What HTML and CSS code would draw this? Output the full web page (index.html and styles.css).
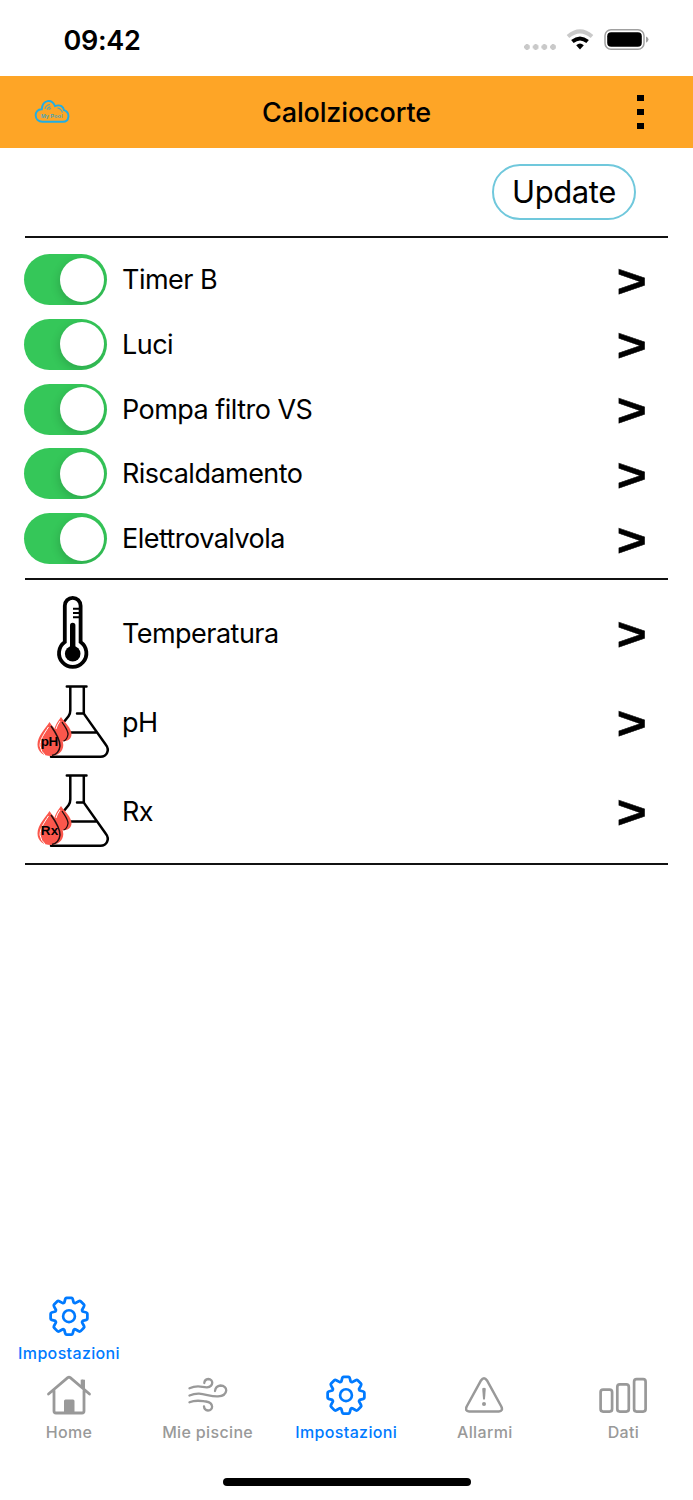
FILE: index.html
```html
<!DOCTYPE html>
<html lang="it">
<head>
<meta charset="utf-8">
<title>Calolziocorte</title>
<link rel="stylesheet" href="styles.css">
</head>
<body>
<svg class="defs" width="0" height="0">
  <symbol id="gear" viewBox="-19.6 -19.8 39.2 39.2">
    <path d="M-4.6-13.4L-3.6-17Q-3.3-18-2.4-18H2.4Q3.3-18 3.6-17L4.6-13.4Q5.3-12.7 6.1-12.8L9.6-14.7Q10.7-15.3 11.4-14.6L14.6-11.4Q15.3-10.7 14.7-9.6L12.8-6.1Q12.7-5.3 13.4-4.6L17-3.6Q18-3.3 18-2.4V2.4Q18 3.3 17 3.6L13.4 4.6Q12.7 5.3 12.8 6.1L14.7 9.6Q15.3 10.7 14.6 11.4L11.4 14.6Q10.7 15.3 9.6 14.7L6.1 12.8Q5.3 12.7 4.6 13.4L3.6 17Q3.3 18 2.4 18H-2.4Q-3.3 18-3.6 17L-4.6 13.4Q-5.3 12.7-6.1 12.8L-9.6 14.7Q-10.7 15.3-11.4 14.6L-14.6 11.4Q-15.3 10.7-14.7 9.6L-12.8 6.1Q-12.7 5.3-13.4 4.6L-17 3.6Q-18 3.3-18 2.4V-2.4Q-18-3.3-17-3.6L-13.4-4.6Q-12.7-5.3-12.8-6.1L-14.7-9.6Q-15.3-10.7-14.6-11.4L-11.4-14.6Q-10.7-15.3-9.6-14.7L-6.1-12.8Q-5.3-12.7-4.6-13.4Z" fill="none" stroke="currentColor" stroke-width="2.7" stroke-linejoin="round"/>
    <circle r="5.8" fill="none" stroke="currentColor" stroke-width="2.6"/>
  </symbol>
  <symbol id="flask" viewBox="0 0 74 74">
    <g fill="none" stroke="#000" stroke-width="2.500" stroke-linecap="round" stroke-linejoin="round">
      <path d="M29.800 1.600H49.500M33.300 2V25.500Q33.300 29 31.500 31.300L24 40.500M46.800 2V28.600L69 60C72.800 65 70 71.800 63.500 71.800H14M40 28.600H47M33 47.600H58.500"/>
    </g>
    <path d="M24 32C28 38 34.500 42.500 34.500 49.500C34.500 58 20 59 17 49C16 43 21 36 24 32Z" fill="#fb574c"/>
    <path d="M12.500 37C17 44 26.300 51 26.300 60C26.300 74.500 .5 75 .5 59.500C.5 51 8 44 12.500 37Z" fill="#fb574c"/>
    <path d="M25 37C28 42 31 45 31 49.500Q30 55 26.500 56" fill="none" stroke="#231010" stroke-width="1.300"/>
    <path d="M14 41C19 48 23 54 23 61Q22 69 15 70.500" fill="none" stroke="#231010" stroke-width="1.500"/>
    <path d="M11.500 42C7 49 3 54 3 61Q4 67 8 70M23 36Q20 40 19 44" fill="none" stroke="#fff" stroke-width="1"/>
  </symbol>
</svg>
<header class="status">
  <time class="clock">09:42</time>
  <div class="signals">
    <i class="dots"></i>
    <svg class="wifi" width="28" height="22" viewBox="0 0 28 22">
      <path d="M2 7.600Q14-2.800 26 7.600" fill="none" stroke="#c9c9c9" stroke-width="4"/>
      <path d="M6.400 12.600Q14 6.200 21.600 12.600" fill="none" stroke="#000" stroke-width="3.900"/>
      <path d="M10.200 16.300Q14 12.800 17.800 16.300L14 20.400Z"/>
    </svg>
    <svg class="battery" width="45" height="22" viewBox="0 0 45 22">
      <rect x="1" y=".8" width="39" height="19.500" rx="6" fill="none" stroke="#a0a0a0" stroke-width="1.500"/>
      <rect x="3.200" y="3.200" width="34.600" height="14.600" rx="4"/>
      <path d="M42 7.500Q44.500 8.500 44.500 10.500T42 13.700Z" fill="#a0a0a0"/>
    </svg>
  </div>
</header>
<nav class="appbar">
  <svg class="logo" width="36" height="24" viewBox="0 0 36 24">
    <path d="M8.500 21.700C-.5 21.700-.5 9 7.800 9.300C8.500-1 18-1.200 21 6.100C26.500 4 29.500 7 30 10.200C36.500 12.500 35.500 21.700 29 21.700Z" fill="none" stroke="#1faee6" stroke-width="1.900"/>
    <path d="M11 9Q11.500 5.200 16 4.500M13.200 9.600Q13.500 7.500 16.500 6.700M15 9.800Q15.500 8.800 17 8.500M23.500 8Q27 8.500 28.500 12.500" fill="none" stroke="#4ba6b6" stroke-width="1.100"/>
    <text class="logo-text" x="7" y="18" textLength="21.500">My Pool</text>
  </svg>
  <h1 class="title">Calolziocorte</h1>
  <span class="more"><i></i><i></i><i></i></span>
</nav>
<main class="content">
  <div class="actions"><button class="update"><span>Update</span></button></div>
  <section class="switches">
    <div class="row"><span class="switch"><i></i></span><span class="name">Timer B</span><b class="go">&gt;</b></div>
    <div class="row"><span class="switch"><i></i></span><span class="name">Luci</span><b class="go">&gt;</b></div>
    <div class="row"><span class="switch"><i></i></span><span class="name">Pompa filtro VS</span><b class="go">&gt;</b></div>
    <div class="row"><span class="switch"><i></i></span><span class="name">Riscaldamento</span><b class="go">&gt;</b></div>
    <div class="row"><span class="switch"><i></i></span><span class="name">Elettrovalvola</span><b class="go">&gt;</b></div>
  </section>
  <section class="sensors">
    <div class="row">
      <span class="pic"><svg width="74" height="74" viewBox="0 0 74 74">
        <path d="M27.800 46V9.800A7.900 7.900 0 0 1 43.600 9.800V46A13.700 13.700 0 1 1 27.800 46Z" fill="none" stroke="#000" stroke-width="3.800"/>
        <circle cx="35.700" cy="57.800" r="7.800"/>
        <path d="M35.700 57V29.500" stroke="#000" stroke-width="5.400" stroke-linecap="round"/>
        <path d="M36 12.800H43M36 17H43M36 21.200H43" stroke="#000" stroke-width="1.900"/>
      </svg></span><span class="name">Temperatura</span><b class="go">&gt;</b></div>
    <div class="row">
      <span class="pic"><svg width="74" height="74"><use href="#flask"/><text class="tag" x="3.800" y="61.300" textLength="17.500">pH</text></svg></span><span class="name">pH</span><b class="go">&gt;</b></div>
    <div class="row">
      <span class="pic"><svg width="74" height="74"><use href="#flask"/><text class="tag" x="3.800" y="61.300" textLength="17.500">Rx</text></svg></span><span class="name">Rx</span><b class="go">&gt;</b></div>
  </section>
</main>
<footer class="footer">
  <div class="tabs">
    <a class="tab active"><svg width="40" height="40"><use href="#gear"/></svg><span>Impostazioni</span></a>
  </div>
  <div class="tabs">
    <a class="tab"><svg width="46" height="40" viewBox="0 0 46 40">
      <path d="M2.500 19L21.700 2.700Q23 1.800 24.300 2.700L43.500 19M8 15.500V36Q8 38 10 38H36Q38 38 38 36V15.500M36.500 12V6" fill="none" stroke="currentColor" stroke-width="2.800" stroke-linecap="round"/>
      <path d="M34.700 4.800H39V15L34.700 11.500ZM18 26Q18 24.500 19.500 24.500H27Q28.500 24.500 28.500 26V38H18Z" fill="currentColor"/></svg><span>Home</span></a>
    <a class="tab"><svg width="40" height="40" viewBox="0 0 40 40">
      <path d="M1.500 13.200C10 9.500 14 12.500 19 12.300C26 11.500 25.500 4 20.300 4Q16.500 4.500 16.300 8M1.500 20.500C13 15.500 20 22 30 21.400C41 20.500 40 10.500 32.500 10.500Q27.500 11 27 16M1.500 27.300C8 24.500 12 25.800 18 26.500C26 27.500 25.500 35.500 20 35.500Q16.300 35 16 31.300" fill="none" stroke="currentColor" stroke-width="2.300" stroke-linecap="round"/></svg><span>Mie piscine</span></a>
    <a class="tab active"><svg width="40" height="40"><use href="#gear"/></svg><span>Impostazioni</span></a>
    <a class="tab"><svg width="40" height="40" viewBox="1 0 40 40">
      <path d="M17 5.500Q20 1 23 5.500L37.300 31.500Q39.400 36 34.800 36.500H5.200Q.6 36 2.700 31.500Z" fill="none" stroke="currentColor" stroke-width="2.500"/>
      <path d="M18.200 13.500Q20 11.800 21.800 13.500L21 24Q20 25.500 19 24Z" fill="currentColor"/><circle cx="20" cy="29" r="2" fill="currentColor"/></svg><span>Allarmi</span></a>
    <a class="tab"><svg width="48" height="40" viewBox="1 0 48 40" overflow="visible">
      <g fill="none" stroke="currentColor" stroke-width="2.700"><rect x="1.600" y="14.600" width="11.500" height="22" rx="2.500"/><rect x="18.300" y="9.400" width="11.500" height="27.200" rx="2.500"/><rect x="35.100" y="4.200" width="11.500" height="32.400" rx="2.500"/></g></svg><span>Dati</span></a>
  </div>
  <div class="home-bar"></div>
</footer>
</body>
</html>
```
FILE: styles.css
```css
* { box-sizing: border-box; }
body {
  margin: 0; width: 693px; height: 1500px;
  display: flex; flex-direction: column;
  background: #fff; color: #000;
  font-family: Inter, "Liberation Sans", sans-serif;
}
.defs { display: block; width: 0; height: 0; flex: none; }
.status { height: 76px; flex: none; display: flex; justify-content: space-between; padding: 0 44px 0 63.500px; }
.clock { font-size: 27px; font-weight: 600; line-height: 81px; letter-spacing: -.3px; }
.signals { display: flex; align-items: flex-start; padding-top: 29px; }
.dots {
  width: 33px; height: 6px; margin: 15px 9px 0 0;
  background: radial-gradient(circle at 3px 3px, #c9c9c9 2.600px, transparent 3.100px) 0 0 / 8.700px 6px;
}
.battery { margin-left: 10px; }
.appbar {
  height: 72px; flex: none; background: #fea526;
  display: grid; grid-template-columns: 100px 1fr 100px; align-items: center;
}
.logo { margin-left: 34px; }
.logo-text { font: 700 5.500px "Liberation Sans", sans-serif; fill: #4ba6b6; }
.title { margin: 0; text-align: center; font-size: 27px; font-weight: 550; letter-spacing: -.15px; }
.more { display: flex; flex-direction: column; gap: 8px; margin-left: 44px; }
.more i { width: 7px; height: 6px; background: #000; }
.content { padding: 0 25px; }
.actions { height: 90px; padding: 16px 32px 0 0; border-bottom: 2px solid #111; display: flex; justify-content: flex-end; }
.update {
  width: 144px; height: 56px; border: 2px solid #70c8dc; border-radius: 28px;
  background: #fff; color: #000; font: 400 31px Inter, sans-serif; padding: 0 0 2px; letter-spacing: -.4px;
}
.switches { height: 342px; padding-top: 16px; display: flex; flex-direction: column; gap: 13.800px; border-bottom: 2px solid #111; }
.row { display: grid; grid-template-columns: 97px 1fr 52px; align-items: center; }
.switches .row { height: 51px; }
.switch {
  width: 83px; height: 51px; margin-left: -.700px; padding: 3.500px; border-radius: 26px;
  background: #35c759; display: flex; justify-content: flex-end; overflow: hidden;
}
.switch i { width: 44px; height: 44px; border-radius: 50%; background: #fff; box-shadow: -1px 3px 10px rgba(0,0,0,.16); }
.name { font-size: 27px; line-height: 34px; letter-spacing: -.53px; padding-top: 1px; }
.go {
  font: 700 54px/40px "Liberation Sans", Arial, sans-serif; height: 40px; margin-left: -.500px;
  transform: scale(.95, .86); transform-origin: 16px 24px; -webkit-text-stroke: .5px #000;
}
.sensors { height: 285px; padding-top: 16px; display: flex; flex-direction: column; gap: 15.100px; border-bottom: 2px solid #111; }
.sensors .row { height: 74px; }
.pic { padding-left: 12px; height: 74px; }
.tag { font: 700 13.500px "Liberation Sans", Arial, sans-serif; }
.footer { margin-top: auto; height: 204px; }
.tabs { display: grid; grid-template-columns: repeat(5, 1fr); height: 79px; }
.tab { display: flex; flex-direction: column; align-items: center; color: #999; font-size: 16px; font-weight: 500; line-height: 20px; letter-spacing: .35px; white-space: nowrap; }
.tab span { margin-top: 7px; margin-right: .500px; }
.tab.active { color: #007aff; }
.home-bar { width: 248px; height: 8px; border-radius: 4px; background: #000; margin: 24px auto 0; }
```
